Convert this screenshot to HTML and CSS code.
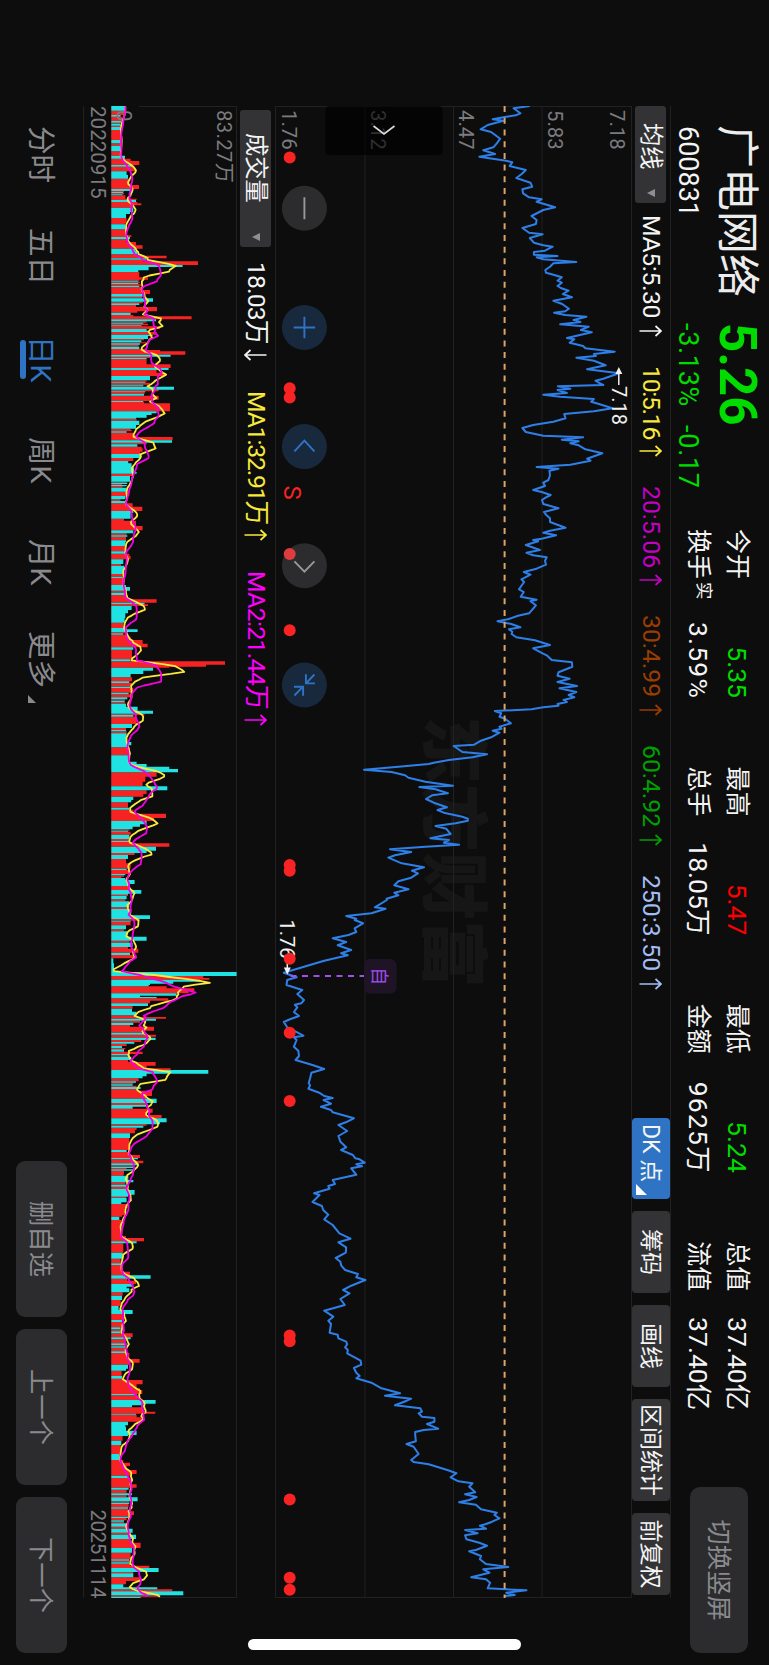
FILE: index.html
```html
<!DOCTYPE html>
<html lang="zh-CN">
<head>
<meta charset="utf-8">
<title>广电网络 600831</title>
<link rel="stylesheet" href="styles.css">
</head>
<body>
<div class="device">
<div class="screen">
  <header class="header">
    <div class="identity">
      <span class="name">广电网络</span><span class="price">5.26</span>
      <span class="code">600831</span><span class="change"><span>-3.13%</span><span>-0.17</span></span>
    </div>
    <div class="stats">
      <div class="stat"><span class="label">今开</span><span class="down">5.35</span></div>
      <div class="stat"><span class="label">最高</span><span class="up">5.47</span></div>
      <div class="stat"><span class="label">最低</span><span class="down">5.24</span></div>
      <div class="stat"><span class="label">总值</span><span>37.40亿</span></div>
      <div class="stat"><span class="label">换手<sup class="real">实</sup></span><span class="loose">3.59%</span></div>
      <div class="stat"><span class="label">总手</span><span>18.05万</span></div>
      <div class="stat"><span class="label">金额</span><span class="loose">9625万</span></div>
      <div class="stat"><span class="label">流值</span><span>37.40亿</span></div>
    </div>
    <div class="rotate-btn">切换竖屏</div>
  </header>

  <div class="bar indicator-bar">
    <div class="picker picker-ma"><span>均线</span><i class="caret"></i></div>
    <div class="values">
      <span class="val ma-5">MA5:5.30<svg class="arrow"><use href="#arrow-up"/></svg></span>
      <span class="val ma-10">10:5.16<svg class="arrow"><use href="#arrow-up"/></svg></span>
      <span class="val ma-20">20:5.06<svg class="arrow"><use href="#arrow-up"/></svg></span>
      <span class="val ma-30">30:4.99<svg class="arrow"><use href="#arrow-up"/></svg></span>
      <span class="val ma-60">60:4.92<svg class="arrow"><use href="#arrow-up"/></svg></span>
      <span class="val ma-250">250:3.50<svg class="arrow"><use href="#arrow-up"/></svg></span>
    </div>
    <div class="tools">
      <div class="tool tool-dk">DK 点<i class="corner"></i></div>
      <div class="tool">筹码</div>
      <div class="tool">画线</div>
      <div class="tool tool-range">区间统计</div>
      <div class="tool">前复权</div>
    </div>
  </div>

  <svg class="price-chart" viewBox="106 137 1492 357">
    <text class="watermark" x="716" y="340" textLength="272">东方财富</text>
    <g class="grid">
      <path d="M106 137.5H1597.5V493.5H106.5V137.5M106 227H1597.5M106 315.5H1597.5M106 404H1597.5"/>
    </g>
    <g class="axis">
      <text x="110" y="159">7.18</text>
      <text x="110" y="221.3">5.83</text>
      <text x="110" y="309.8">4.47</text>
      <text x="110" y="398">3.12</text>
      <text x="110" y="487.3">1.76</text>
    </g>
    <path class="price-line" id="priceLine"/>
    <path class="current" d="M106 264.4H1598"/>
    <g class="note">
      <text x="386" y="157.3">7.18</text>
      <path d="M385 150.2H370"/><path class="tip" d="M367 150.2l7-3.5v7z"/>
      <text x="919.5" y="489">1.76</text>
      <path d="M956 481.7H970"/><path class="tip" d="M974.5 481.7l-7-3.5v7z"/>
    </g>
    <path class="own-line" d="M976 478.5V404.5"/>
    <rect class="own-box" x="959" y="372.5" width="34.5" height="32.5" rx="6"/>
    <text class="own-text" x="976.2" y="396">自</text>
    <g class="dots" id="dots"></g>
    <text class="sell" x="485.6" y="485.2">S</text>
    <g class="handle">
      <rect x="106" y="326.5" width="49" height="117" rx="4"/>
      <path d="M126 374.5L134 385L126 395.5"/>
    </g>
    <g class="controls">
      <g transform="translate(208.3 464.6)"><circle r="22.5"/><path d="M-11 0H11"/></g>
      <g class="on" transform="translate(327.5 464.6)"><circle r="22.5"/><path d="M-10.7 0H10.7M0-10.7V10.7"/></g>
      <g class="on" transform="translate(446.6 464.6)"><circle r="22.5"/><path d="M4.8-10L-6 0L4.8 10"/></g>
      <g transform="translate(565.7 464.6)"><circle r="22.5"/><path d="M-4.3-10L6 0L-4.3 10"/></g>
      <g class="on" transform="translate(685 464.6)"><circle r="22.5"/><path d="M-10.5-10L-1.6-1.6M-10.7-1.5H-1.6V-10.5M10.5 10L1.6 1.4M10.7 1.3H1.7V10.4"/></g>
    </g>
    <circle class="dot-veiled" cx="554" cy="479.3" r="6"/>
  </svg>

  <div class="bar volume-bar">
    <div class="picker picker-vol"><span>成交量</span><i class="caret"></i></div>
    <div class="values">
      <span class="val vol-now">18.03万<svg class="arrow"><use href="#arrow-down"/></svg></span>
      <span class="val vol-ma1">MA1:32.91万<svg class="arrow"><use href="#arrow-up"/></svg></span>
      <span class="val vol-ma2">MA2:21.44万<svg class="arrow"><use href="#arrow-up"/></svg></span>
    </div>
  </div>

  <svg class="volume-chart" viewBox="106 532 1492 127">
    <path class="grid" d="M106.5 630V532.5H1597.5V657.5H106"/>
    <path class="vol-up" id="volUp"/>
    <path class="vol-down" id="volDown"/>
    <g class="axis">
      <text x="110" y="552" textLength="73">83.27万</text>
      <text x="110" y="652">0</text>
    </g>
    <path class="ma5" id="ma5"/>
    <path class="ma10" id="ma10"/>
  </svg>

  <div class="dates"><span>20220915</span><span class="date-end">20251114</span></div>

  <footer class="footer">
    <nav class="tabs">
      <span class="tab">分时</span>
      <span class="tab">五日</span>
      <span class="tab active">日K</span>
      <span class="tab">周K</span>
      <span class="tab">月K</span>
      <span class="tab">更多<i class="more"></i></span>
    </nav>
    <div class="actions">
      <div class="action">删自选</div>
      <div class="action">上一个</div>
      <div class="action">下一个</div>
    </div>
  </footer>
  <div class="home"></div>
</div>
</div>
<svg class="defs">
  <symbol id="arrow-up" viewBox="0 0 12 23"><path d="M6 22.5V1.5M1 6.5L6 1L11 6.5"/></symbol>
  <symbol id="arrow-down" viewBox="0 0 12 23"><path d="M6 .5V21.5M1 16.5L6 22L11 16.5"/></symbol>
</svg>
<script src="chart.js"></script>
</body>
</html>
```
FILE: styles.css
```css
html, body {
  margin: 0;
  background: #0d0d0d;
}
.device {
  width: 769px;
  height: 1665px;
  overflow: hidden;
}
/* Landscape layout shown on a device held upright. */
.screen {
  position: relative;
  display: flex;
  flex-direction: column;
  width: 1665px;
  height: 769px;
  box-sizing: border-box;
  padding-left: 106px;
  transform-origin: 0 0;
  transform: translateX(769px) rotate(90deg);
  background: #0d0d0d;
  color: #f4f4f4;
  font-family: Roboto, "Noto Sans CJK SC", sans-serif;
  overflow: hidden;
}
.defs { position: absolute; width: 0; height: 0; }

.header {
  display: flex;
  height: 98px;
  padding-left: 20px;
  flex: none;
}
.identity {
  display: grid;
  grid-template-columns: 197px 1fr;
  grid-template-rows: 61px 37px;
  width: 403px;
  line-height: 40px;
  font-size: 27px;
  flex: none;
}
.name { font-size: 43px; line-height: 64px; color: #ececec; margin-left: -1px; }
.price { font-size: 51px; line-height: 63px; font-weight: 700; color: #00dc00; }
.change { display: flex; gap: 18px; color: #00dc00; letter-spacing: .7px; }
.stats {
  display: grid;
  grid-template-columns: repeat(4, 169px);
  grid-auto-rows: 39.5px;
  column-gap: 68.4px;
  padding-top: 11.5px;
  font-size: 26.5px;
  line-height: 40px;
}
.stat { display: flex; justify-content: space-between; white-space: nowrap; }
.label { font-size: 25px; }
.loose { letter-spacing: 1.2px; margin-right: -1px; }
.real { font-size: 17.5px; line-height: 0; vertical-align: 8px; margin-left: 3px; }
.up { color: #f00; }
.down { color: #00dc00; }
.rotate-btn {
  width: 166px;
  height: 58px;
  margin: 21px 0 0 77px;
  border-radius: 10px;
  background: #2c2c2e;
  color: #8a8a8e;
  font-size: 25.3px;
  line-height: 60px;
  text-align: center;
}

.bar {
  display: flex;
  align-items: center;
  width: 1492px;
  box-sizing: border-box;
  flex: none;
}
.indicator-bar { height: 39px; border-top: 1px solid #212121; }
.volume-bar { height: 38px; padding-left: 4px; }
.picker {
  display: flex;
  align-items: center;
  justify-content: space-between;
  height: 31px;
  box-sizing: border-box;
  border-radius: 3px;
  background: #333335;
  font-size: 23.3px;
  line-height: 33px;
}
.picker-ma { width: 97px; padding: 0 6px 0 17px; }
.picker-vol { width: 137px; padding: 0 6px 0 23px; }
.caret {
  border: 4px solid transparent;
  border-top: 8px solid #8e8e93;
  border-bottom: 0;
}
.values { display: flex; gap: 29px; margin-left: 12px; font-size: 24.8px; line-height: 38px; }
.volume-bar .values { margin-left: 15px; gap: 30px; }
.val { display: flex; align-items: center; justify-content: space-between; white-space: nowrap; }
.arrow { width: 12px; height: 23px; fill: none; stroke: currentColor; stroke-width: 1.7; }
.ma-5 { width: 122px; color: #f4f4f4; letter-spacing: -.4px; }
.ma-10 { width: 91px; color: #f7e83c; letter-spacing: -1.3px; }
.ma-20 { width: 100px; color: #c400c4; }
.ma-30 { width: 101px; color: #9c3d00; }
.ma-60 { width: 101px; color: #00a000; }
.ma-250 { width: 115px; color: #a4bdf5; }
.vol-now { width: 99px; color: #f4f4f4; letter-spacing: -.9px; }
.vol-ma1 { width: 150px; color: #f7e83c; letter-spacing: -1.2px; }
.vol-ma2 { width: 155px; color: #f0f; letter-spacing: -.7px; }
.tools { display: flex; gap: 12px; margin: 0 3px 0 auto; }
.tool {
  position: relative;
  width: 82px;
  height: 38px;
  border-radius: 4px;
  background: #333335;
  font-size: 23px;
  line-height: 39px;
  text-align: center;
}
.tool-range { width: 102px; }
.tool-dk {
  width: 75px;
  padding-left: 6px;
  background: #2f74c4;
  text-align: left;
  font-size: 23px;
}
.corner {
  position: absolute;
  right: 4px;
  bottom: 4px;
  border-left: 11px solid transparent;
  border-bottom: 11px solid #fff;
}

.price-chart { width: 1492px; height: 357px; flex: none; display: block; }
.volume-chart { width: 1492px; height: 127px; flex: none; display: block; }
.grid { fill: none; stroke: #212121; stroke-width: 1; }
.axis { fill: #7b7b7f; font-size: 20.3px; }
.watermark { font-size: 68px; font-weight: 900; fill: #161616; }
.price-line { fill: none; stroke: #2e80e8; stroke-width: 2; stroke-linejoin: round; }
.current { fill: none; stroke: #dca36a; stroke-width: 2; stroke-dasharray: 6 5.72; }
.note { fill: #f0f0f0; stroke: none; font-size: 20px; }
.note path { stroke: #f0f0f0; stroke-width: 1.5; }
.note .tip { stroke: none; }
.own-line { stroke: #a34ff0; stroke-width: 1.9; stroke-dasharray: 6 5.5; }
.own-box { fill: #1e1426; }
.own-text { fill: #a34ff0; font-size: 18px; text-anchor: middle; }
.dots, .sell { fill: #fa2323; }
.sell { font-size: 24px; }
.handle rect { fill: #000; fill-opacity: .62; }
.handle path { fill: none; stroke: #dcdcdc; stroke-width: 1.6; }
.controls circle { fill: #2c2c2e; }
.controls path { fill: none; stroke: #98989c; stroke-width: 1.9; }
.controls .on circle { fill: #18293e; }
.controls .on path { stroke: #2f74c4; }
.dot-veiled { fill: #df3c3e; }

.vol-up { fill: #f72323; }
.vol-down { fill: #1fe3e3; }
.ma5, .ma10 { fill: none; stroke-width: 1.8; stroke-linejoin: round; }
.ma5 { stroke: #fbea3e; }
.ma10 { stroke: #f400e4; }

.dates {
  display: flex;
  justify-content: space-between;
  width: 1492px;
  height: 27px;
  box-sizing: border-box;
  border-bottom: 1px solid #212121;
  color: #7b7b7f;
  font-size: 20.6px;
  line-height: 24px;
  flex: none;
}
.date-end { letter-spacing: -.5px; }

.footer { display: flex; justify-content: space-between; flex: 1; padding: 0 12px 0 20px; }
.tabs { display: flex; font-size: 28.5px; line-height: 86px; color: #8a8a8e; }
.tab { position: relative; white-space: nowrap; }
.tab:nth-child(1) { width: 102px; }
.tab:nth-child(2) { width: 108px; }
.tab:nth-child(3) { width: 101px; }
.tab:nth-child(4) { width: 102px; }
.tab:nth-child(5) { width: 92px; }
.active { color: #2f74c4; }
.active::after {
  content: "";
  position: absolute;
  left: 4px;
  top: 57px;
  width: 39px;
  height: 5.5px;
  border-radius: 3px;
  background: #2f74c4;
}
.more {
  display: inline-block;
  margin-left: 7px;
  vertical-align: -3px;
  border-left: 8px solid transparent;
  border-bottom: 8px solid #8a8a8e;
}
.actions { display: flex; gap: 12px; padding-top: 16px; }
.action {
  width: 156px;
  height: 51px;
  border-radius: 9px;
  background: #2c2c2e;
  color: #8a8a8e;
  font-size: 25.3px;
  line-height: 54px;
  text-align: center;
}
.home {
  position: absolute;
  left: 1639px;
  top: 247.5px;
  width: 11px;
  height: 273.5px;
  border-radius: 6px;
  background: #fff;
}
```
FILE: chart.js
```js
// Price samples: each block has a time offset and "price,time" pairs.
const PRICE = [
  [90, "860,48 812,55 832,70 818,76 790,80 750,88 782,92 735,105 714,118 745,126 772,146 762,160 752,172 722,181 757,192 710,200 790,212 808,217 800,228 848,240 836,252 820,264 862,278 867,290 838,298 840,310 858,322 895,328 880,335 935,352 900,360 865,378 880,390 878,402 838,414 858,428 898,433 860,444 872,458 900,466 928,470 905,482 872,486 872,494 942,498 880,502 900,508 998,516 930,520 920,530 906,540 908,548 925,553 955,562 942,572 955,578 942,588 952,594 975,602 958,612 985,622 930,632 956,642 976,656 965,664 932,668 965,675 1028,680 990,690 1010,696 950,703 1035,710 1012,720 1044,727 970,744 992,748 978,758 1018,768 1025,775 1112,785 1050,792 1056,798 998,803 1050,812 1085,826 1030,838 1125,850 1078,866 1055,872 1068,880 1078,885 943,889 980,896 942,900 970,909 900,914 950,920 1050,927 1042,935 1065,942 1105,955 1050,964 962,972 966,985 930,995 870,1005 838,1014 848,1026 900,1037 1018,1042 955,1049 1005,1054 980,1060 1005,1066 1025,1078 1075,1090 1030,1106 1040,1112 980,1124 880,1131 945,1136 918,1142 920,1156 915,1170 900,1178 905,1188 870,1200 895,1206 922,1215 908,1222"],
  [500, "896,0 900,12 945,25 902,36 908,44 920,55 920,66 966,83 920,92 900,98 938,106 895,116 870,120 885,124 848,135 890,150 850,158 870,166 910,172 905,182 908,194 880,206 842,216 862,224 835,238 843,246 828,268 842,276 833,290 880,299 862,304 878,316 858,340 825,347 795,358 764,364 805,372 832,382 798,388 808,395 806,402 820,412 875,421 920,435 870,445 898,460 910,466 925,480 985,487 986,500 945,517 942,527 978,536 942,546 1000,558 948,565 998,576 975,585 992,592 960,600 970,606 942,612 945,617 900,622 865,628 756,633 775,640 770,650 786,656 804,670 770,680 776,686 750,692 770,698 745,712 715,722 695,734 634,738 660,756 733,763 690,772 620,780 575,788 560,792 470,800 368,809 450,816 490,826 500,833 550,845 632,857 532,861 580,868 617,880 570,886 552,897 575,908 614,922 586,930 605,938 660,950 676,956 676,962 640,970 580,978 612,986 625,1002 565,1015 620,1020 605,1028 650,1034 550,1040 445,1048 508,1056 460,1066 440,1073 480,1090 546,1102 510,1112 528,1120 508,1133 470,1144 458,1156 500,1168 458,1178 470,1186 435,1196"],
  [900, "436,0 400,22 432,26 390,40 315,48 345,56 340,60 365,70 340,85 345,96 322,105 275,115 315,126 290,136 330,150 300,160 320,166 250,182 130,218 168,232 140,240 138,255 185,270 170,282 190,300 182,310 163,314 170,322 160,336 175,348 150,357 130,366 140,382 160,392 188,407 160,412 168,420 160,440 173,452 175,468 165,480 215,495 250,507 212,518 208,535 204,550 208,556 203,566 235,578 250,588 275,594 248,600 270,611 240,620 270,630 275,637 338,655 318,665 292,675 318,693 292,708 298,725 315,742 300,750 335,765 342,775 355,778 370,788 345,793 362,799 330,805 345,824 275,840 282,852 262,858 266,866 220,880 236,885 215,906 243,918 247,930 262,944 250,958 275,975 295,1000 328,1016 292,1027 315,1042 314,1058 284,1074 298,1085 300,1096 312,1110 350,1122 345,1132 372,1140 330,1157 306,1170 325,1180 298,1197"],
  [1300, "300,0 311,15 250,32 277,50 262,62 270,72 266,98 290,104 292,115 315,125 318,133 312,142 320,150 318,160 340,172 358,182 360,194 338,204 345,218 355,228 345,235 390,248 420,265 475,280 430,287 508,296 495,302 460,316 535,325 540,335 530,340 540,350 577,354 577,365 555,372 588,386 545,390 520,396 520,405 522,424 494,432 515,440 530,462 508,480 515,486 560,493 615,510 642,520 625,532 648,544 690,550 680,560 698,577 668,583 702,591 680,600 650,607 700,614 715,628 762,638 755,645 770,655 748,665 728,673 712,677 730,686 668,690 705,700 668,706 672,718 710,728 733,737 700,750 680,754 715,768 712,778 730,792 796,801 722,808 740,818 686,832 730,838 742,848 735,865 790,868 850,871 790,878 815,885 786,888"]
];

// Volume runs: time offset, first position, then end position + direction (c/r) + level.
const VOLUME = [
  [90, 47, "62c376 75r372 80c362 93r366 98c364 101r362 107c362 111r360 120c362 150r366 160c362 167r364 184c362 187r360 197r362 206c375 213r392 225r418 230c400 237r404 244r410 255c380 266c384 285r388 297r417 303c392 306r372 309c370 313r372 316c368 326r376 330r410 336c408 340r412 346r424 353r400 366c400 372c390 384c378 400r380 403r376 418c376 436r380 441r394 448c390 456r378 466r408 476r428 483c405 493c412 497r410 505r500 509c440 514r430 525r594 531c548 541c446 546c415 562r418 569r444 572r418 575c415 579r420 583c415 587r424 591c418 600r426 612r450 620c428 625r426 635c459 640r428 645c418 651r408 664r471 668r412 675c392 679r400 688r575 694c468 698r440 701c430 706r444 709c425 717r480 722c440 726c446 734r470 738c458 747c444 751r432 757c424 760r438 764c420 770r416 777c418 780r440"],
  [350, 0, "4r480 14r556 20c512 24r450 27c440 43r440 54r512 60c506 68r470 78r495 91c450 95r440 98c436 104r450 107c430 110r430 119c522 124r476 127c436 132r434 137c432 149r476 153r450 156c430 160r432 184r510 190c470 195c455 203c440 206c408 212r410 225c418 236c408 240r392 244r395 248c380 256r400 261r410 271r518 278c516 283r440 290c412 295r425 305r428 312r420 324c424 327r400 333r400 340c385 352c395 366c402 371c410 378r396 395c390 398r380 402c382 405r366 409c380 413r368 425c380 438r388 448c376 453r362 460c376 470r398 483r427 489c400 506c392 512r372 528r408 541r428 550c400 556r380 560c382 571r378 576c378 588c376 604r376 611c378 618r388 628r392 642c370 647r363 672c372 680r372 684c368 695r372 705r368 711c378 722c390 728r372 735c376 744r378 748r390 758r470 763c434 768r444 780c395"],
  [610, 0, "10c384 25c376 38c374 54r370 58c380 66c413 70r376 74c370 80r384 90r392 101r428 112r443 119c400 148r396 154c392 164r675 170r618 173r508 182c459 192c430 202c392 214r396 219c388 230r396 234c390 248r400 253c386 262r396 268c382 272r375 277c374 281r376 290c378 302c413 311c459 315r434 320c400 342r410 354c396 360r378 364c378 370r380 396c380 406c394 412c386 436r390 455c384 462c410 470c440 477c508 487c534 500r470 515r436 529r428 541c502 552r440 560r430 570c400 577c394 593r384 599c388 611r400 624r498 633r462 643c440 650c420 658c398 662r388 665c384 674r392 687c388 693r388 696c390 700r398 710r508 722c468 729c440 735r404 747c384 760r378 776r392 780c380"],
  [870, 0, "12r388 16c376 20r372 24r364 30c376 42c404 48c390 60r390 71c424 74c384 78r384 88c380 94r376 112c388 117r386 130c394 136c386 147c450 152r420 155c392 166r392 178c378 184r372 200c382 212c440 218r388 231c398 236r384 248r415 255c390 265r410 280c340 306c342 318c710 324r610 329r628 335c600 341c520 345c450 349c446 355r500 364r583 370r566 377c530 381c420 385c470 392r505 400r450 408c444 416r398 425c396 436c410 441r410 446r498 452c468 458r420 465c400 470r390 482r462 488r430 494c440 500r468 503r440 510c467 516r424 521c403 528r380 534c366 538r376 545c372 552r428 556c388 560r390 570c394 576r384 587r467 595r440 600r512 611c625 619c440 625c428 634r416 638c408 643r400 647c398 651r410 657c422 662r410 678r456 686r440 699c470 705r440 710c438 716c398 728r458 735r440 745r485 757c500 763c480 767r440 773c430 780r410"],
  [1130, 0, "10r405 24c390 60r388 66c380 75r385 84r420 88c414 92r400 100r430 106c416 110r400 114c400 118r380 122c400 134r372 137r370 150c385 157c400 164r376 170c378 177r378 180c380 194c404 200c384 204r378 217c380 222c364 234r383 245r374 256r378 260r366 270c358 318r364 324r378 334r432 340c410 368r370 386c368 400r362 405c368 425r366 436r390 446c452 452r382 462r408 470c400 475c380 487c388 497r368 510c366 528r362 540c356 552c398 562r368 570r370 576c366 592r366 598c362 604r364 610c362 622r398 628c392 640r376 645c380 649r378 653c380 664r376 669c378 687r388 698r419 704r390 716c384 722c378 738r365 746c366 750r372 763r428 775r410 780r420"],
  [1390, 0, "12r427 16c410 30r415 41c467 46c430 52c396 60r430 65r432 71r466 74c408 82r410 95r425 106c384 110c376 122c378 135c410 138c384 152r368 165c364 192r362 210c358 218r370 228r390 240r380 252r410 257r392 264c385 283r392 293r410 299c386 310r380 316c396 322r380 334c413 338r388 342c388 352r386 356c384 364r384 375r402 380r388 384c384 391r380 395c372 400r372 410c380 416r382 428c398 434r388 447c408 452r388 458r392 474r422 488c396 508r392 512c388 517r390 521c388 527r390 534r448 546c476 550r400 562c400 573r420 583r378 592c370 598c472 604r517 616c550 620r480 624c422"]
];

const WIDTH = 769;
const BASE = WIDTH - 111.3;
const STEP = 1.943;

const line = pts => "M" + pts.map(p => p[0].toFixed(1) + " " + p[1].toFixed(1)).join("L");
const set = (id, d) => document.getElementById(id).setAttribute("d", d);

const price = PRICE.flatMap(([start, data]) => data.split(" ").map(p => {
  const [level, t] = p.split(",").map(Number);
  return [start + t / 3, WIDTH - 240 - level * 0.337];
}));
set("priceLine", line(price));

const runs = [];
VOLUME.forEach(([start, first, data]) => {
  let from = first;
  data.split(" ").forEach(tok => {
    const [, end, dir, level] = tok.match(/(\d+)([cr])(\d+)/);
    runs.push({ a: start + from / 3, b: start + end / 3, dir, h: (level - 334) / 3 });
    from = +end;
  });
});
const bars = dir => runs.filter(r => r.dir === dir)
  .map(r => `M${r.a.toFixed(1)} ${BASE}V${(BASE - r.h).toFixed(1)}H${r.b.toFixed(1)}V${BASE}z`).join("");
set("volUp", bars("r"));
set("volDown", bars("c"));

const samples = [];
for (let t = 106.5; t < 1598; t += STEP) {
  const run = runs.find(r => t >= r.a && t < r.b);
  if (run) samples.push([t, run.h]);
}
const average = n => samples.map(([t], i) => {
  const part = samples.slice(Math.max(0, i - n + 1), i + 1);
  return [t, BASE - part.reduce((s, p) => s + p[1], 0) / part.length];
});
set("ma5", line(average(6)));
set("ma10", line(average(11)));

document.getElementById("dots").innerHTML =
  [157.5, 388.3, 397.5, 630.3, 865, 870.7, 958.7, 1032.7, 1101, 1335.5, 1341.3, 1499.6, 1577.7, 1589.7]
    .map(t => `<circle cx="${t}" cy="479.3" r="6"/>`).join("");
```
